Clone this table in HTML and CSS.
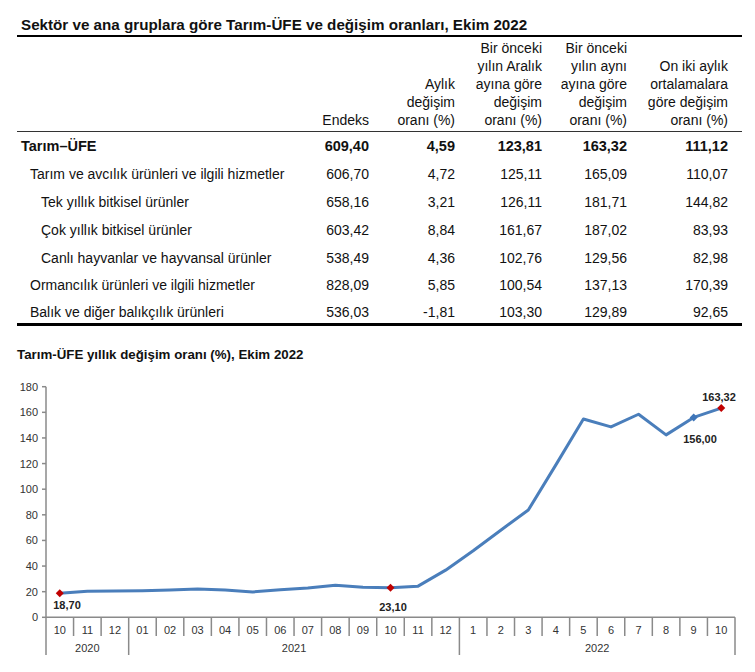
FILE: index.html
```html
<!DOCTYPE html>
<html lang="tr">
<head>
<meta charset="utf-8">
<title>Tarım-ÜFE</title>
<link rel="stylesheet" href="styles.css">
</head>
<body>
<section class="report">
  <h1 class="report-title">Sektör ve ana gruplara göre Tarım-ÜFE ve değişim oranları, Ekim 2022</h1>
  <table class="stats">
    <colgroup>
      <col class="c-label"><col class="c-idx"><col class="c-m"><col class="c-dec"><col class="c-y"><col class="c-avg">
    </colgroup>
    <thead>
      <tr>
        <th></th>
        <th>Endeks</th>
        <th>Aylık<br>değişim<br>oranı (%)</th>
        <th>Bir önceki<br>yılın Aralık<br>ayına göre<br>değişim<br>oranı (%)</th>
        <th>Bir önceki<br>yılın aynı<br>ayına göre<br>değişim<br>oranı (%)</th>
        <th class="last">On iki aylık<br>ortalamalara<br>göre değişim<br>oranı (%)</th>
      </tr>
    </thead>
    <tbody>
      <tr class="total">
        <td class="lbl l0">Tarım–ÜFE</td><td>609,40</td><td>4,59</td><td>123,81</td><td>163,32</td><td class="last">111,12</td>
      </tr>
      <tr>
        <td class="lbl l1">Tarım ve avcılık ürünleri ve ilgili hizmetler</td><td>606,70</td><td>4,72</td><td>125,11</td><td>165,09</td><td class="last">110,07</td>
      </tr>
      <tr>
        <td class="lbl l2">Tek yıllık bitkisel ürünler</td><td>658,16</td><td>3,21</td><td>126,11</td><td>181,71</td><td class="last">144,82</td>
      </tr>
      <tr>
        <td class="lbl l2">Çok yıllık bitkisel ürünler</td><td>603,42</td><td>8,84</td><td>161,67</td><td>187,02</td><td class="last">83,93</td>
      </tr>
      <tr>
        <td class="lbl l2">Canlı hayvanlar ve hayvansal ürünler</td><td>538,49</td><td>4,36</td><td>102,76</td><td>129,56</td><td class="last">82,98</td>
      </tr>
      <tr class="short">
        <td class="lbl l1">Ormancılık ürünleri ve ilgili hizmetler</td><td>828,09</td><td>5,85</td><td>100,54</td><td>137,13</td><td class="last">170,39</td>
      </tr>
      <tr class="final">
        <td class="lbl l1">Balık ve diğer balıkçılık ürünleri</td><td>536,03</td><td>-1,81</td><td>103,30</td><td>129,89</td><td class="last">92,65</td>
      </tr>
    </tbody>
  </table>
</section>

<section class="chart">
  <h2 class="chart-title">Tarım-ÜFE yıllık değişim oranı (%), Ekim 2022</h2>
  <svg class="chart-svg" width="755" height="302" viewBox="0 0 755 302" xmlns="http://www.w3.org/2000/svg">
    <g class="axis">
      <line x1="46" y1="16.7" x2="46" y2="285"/>
      <line x1="46" y1="247.3" x2="735" y2="247.3"/>
      <line x1="42" y1="247.3" x2="46" y2="247.3"/>
      <line x1="42" y1="221.68" x2="46" y2="221.68"/>
      <line x1="42" y1="196.06" x2="46" y2="196.06"/>
      <line x1="42" y1="170.43" x2="46" y2="170.43"/>
      <line x1="42" y1="144.81" x2="46" y2="144.81"/>
      <line x1="42" y1="119.19" x2="46" y2="119.19"/>
      <line x1="42" y1="93.57" x2="46" y2="93.57"/>
      <line x1="42" y1="67.95" x2="46" y2="67.95"/>
      <line x1="42" y1="42.32" x2="46" y2="42.32"/>
      <line x1="42" y1="16.7" x2="46" y2="16.7"/>
      <line x1="73.56" y1="247.3" x2="73.56" y2="266"/>
      <line x1="101.12" y1="247.3" x2="101.12" y2="266"/>
      <line x1="128.68" y1="247.3" x2="128.68" y2="285"/>
      <line x1="156.24" y1="247.3" x2="156.24" y2="266"/>
      <line x1="183.8" y1="247.3" x2="183.8" y2="266"/>
      <line x1="211.36" y1="247.3" x2="211.36" y2="266"/>
      <line x1="238.92" y1="247.3" x2="238.92" y2="266"/>
      <line x1="266.48" y1="247.3" x2="266.48" y2="266"/>
      <line x1="294.04" y1="247.3" x2="294.04" y2="266"/>
      <line x1="321.6" y1="247.3" x2="321.6" y2="266"/>
      <line x1="349.16" y1="247.3" x2="349.16" y2="266"/>
      <line x1="376.72" y1="247.3" x2="376.72" y2="266"/>
      <line x1="404.28" y1="247.3" x2="404.28" y2="266"/>
      <line x1="431.84" y1="247.3" x2="431.84" y2="266"/>
      <line x1="459.4" y1="247.3" x2="459.4" y2="285"/>
      <line x1="486.96" y1="247.3" x2="486.96" y2="266"/>
      <line x1="514.52" y1="247.3" x2="514.52" y2="266"/>
      <line x1="542.08" y1="247.3" x2="542.08" y2="266"/>
      <line x1="569.64" y1="247.3" x2="569.64" y2="266"/>
      <line x1="597.2" y1="247.3" x2="597.2" y2="266"/>
      <line x1="624.76" y1="247.3" x2="624.76" y2="266"/>
      <line x1="652.32" y1="247.3" x2="652.32" y2="266"/>
      <line x1="679.88" y1="247.3" x2="679.88" y2="266"/>
      <line x1="707.44" y1="247.3" x2="707.44" y2="266"/>
      <line x1="735" y1="247.3" x2="735" y2="285"/>
    </g>
    <g class="ylabels">
      <text x="38" y="251.3">0</text>
      <text x="38" y="225.68">20</text>
      <text x="38" y="200.06">40</text>
      <text x="38" y="174.43">60</text>
      <text x="38" y="148.81">80</text>
      <text x="38" y="123.19">100</text>
      <text x="38" y="97.57">120</text>
      <text x="38" y="71.95">140</text>
      <text x="38" y="46.32">160</text>
      <text x="38" y="20.7">180</text>
    </g>
    <g class="xlabels">
      <text x="59.78" y="264">10</text>
      <text x="87.34" y="264">11</text>
      <text x="114.9" y="264">12</text>
      <text x="142.46" y="264">01</text>
      <text x="170.02" y="264">02</text>
      <text x="197.58" y="264">03</text>
      <text x="225.14" y="264">04</text>
      <text x="252.7" y="264">05</text>
      <text x="280.26" y="264">06</text>
      <text x="307.82" y="264">07</text>
      <text x="335.38" y="264">08</text>
      <text x="362.94" y="264">09</text>
      <text x="390.5" y="264">10</text>
      <text x="418.06" y="264">11</text>
      <text x="445.62" y="264">12</text>
      <text x="473.18" y="264">1</text>
      <text x="500.74" y="264">2</text>
      <text x="528.3" y="264">3</text>
      <text x="555.86" y="264">4</text>
      <text x="583.42" y="264">5</text>
      <text x="610.98" y="264">6</text>
      <text x="638.54" y="264">7</text>
      <text x="666.1" y="264">8</text>
      <text x="693.66" y="264">9</text>
      <text x="721.22" y="264">10</text>
      <text x="87.34" y="282">2020</text>
      <text x="294.04" y="282">2021</text>
      <text x="597.2" y="282">2022</text>
    </g>
    <polyline class="series" points="59.78,223.34 87.34,221.17 114.9,220.91 142.46,220.65 170.02,219.88 197.58,218.99 225.14,219.88 252.7,221.93 280.26,219.76 307.82,218.09 335.38,215.27 362.94,217.32 390.5,217.71 418.06,216.17 445.62,200.16 473.18,180.68 500.74,160.19 528.3,140.07 555.86,94.85 583.42,48.99 610.98,56.93 638.54,44.25 666.1,64.87 693.66,47.45 721.22,38.07"/>
    <path class="mk-red" d="M59.78,219.34 L63.78,223.34 L59.78,227.34 L55.78,223.34 Z"/>
    <path class="mk-red" d="M390.5,213.71 L394.5,217.71 L390.5,221.71 L386.5,217.71 Z"/>
    <path class="mk-red" d="M721.22,34.07 L725.22,38.07 L721.22,42.07 L717.22,38.07 Z"/>
    <path class="mk-blue" d="M693.66,43.45 L697.66,47.45 L693.66,51.45 L689.66,47.45 Z"/>
    <g class="dlabels">
      <text x="67" y="239">18,70</text>
      <text x="393" y="240.7">23,10</text>
      <text x="700" y="73">156,00</text>
      <text x="719" y="30.7">163,32</text>
    </g>
  </svg>
</section>
</body>
</html>
```

FILE: styles.css
```css
html, body {
  margin: 0;
  padding: 0;
  background: #ffffff;
}

body {
  font-family: "Liberation Sans", Arial, sans-serif;
  color: #111111;
}

.report {
  padding: 0 13px 0 17px;
}

.report-title {
  margin: 0;
  font-size: 15.2px;
  font-weight: bold;
  line-height: 18px;
  padding: 16px 0 1px 4px;
  border-bottom: 2px solid #000000;
}

.stats {
  width: 725px;
  border-collapse: collapse;
  table-layout: fixed;
  font-size: 14px;
  line-height: 18px;
}

.c-label { width: 293px; }
.c-idx { width: 63px; }
.c-m { width: 86px; }
.c-dec { width: 87px; }
.c-y { width: 85px; }
.c-avg { width: 111px; }

.stats th {
  font-weight: normal;
  text-align: right;
  vertical-align: bottom;
  padding: 2px 4px 2px 0;
  border-bottom: 1px solid #333333;
  white-space: nowrap;
}

.stats td {
  height: 28px;
  padding: 0 4px 0 0;
  text-align: right;
  vertical-align: middle;
  white-space: nowrap;
}

.stats .last {
  padding-right: 14px;
}

.stats td.lbl {
  text-align: left;
}

.stats td.l0 { padding-left: 4px; }
.stats td.l1 { padding-left: 13px; }
.stats td.l2 { padding-left: 24px; }

.stats tr.total td {
  font-weight: bold;
  font-size: 14.5px;
}

.stats tr.short td {
  height: 26px;
}

.stats tr.final td {
  height: 23px;
  padding-top: 2px;
  border-bottom: 3px solid #000000;
}

.chart-title {
  margin: 20px 0 0 0;
  padding-left: 17px;
  font-size: 13.3px;
  font-weight: bold;
  line-height: 18px;
}

.chart-svg {
  display: block;
  margin-top: 6px;
}

.axis line {
  stroke: #8a8a8a;
  stroke-width: 1.5;
}

.ylabels text {
  font-family: "Liberation Sans", Arial, sans-serif;
  font-size: 11px;
  fill: #333333;
  text-anchor: end;
}

.xlabels text {
  font-family: "Liberation Sans", Arial, sans-serif;
  font-size: 11px;
  fill: #333333;
  text-anchor: middle;
}

.series {
  fill: none;
  stroke: #4a7ebb;
  stroke-width: 3;
  stroke-linejoin: round;
}

.mk-red {
  fill: #c00000;
}

.mk-blue {
  fill: #3f76b9;
}

.dlabels text {
  font-family: "Liberation Sans", Arial, sans-serif;
  font-size: 11px;
  font-weight: bold;
  fill: #222222;
  text-anchor: middle;
}
```
